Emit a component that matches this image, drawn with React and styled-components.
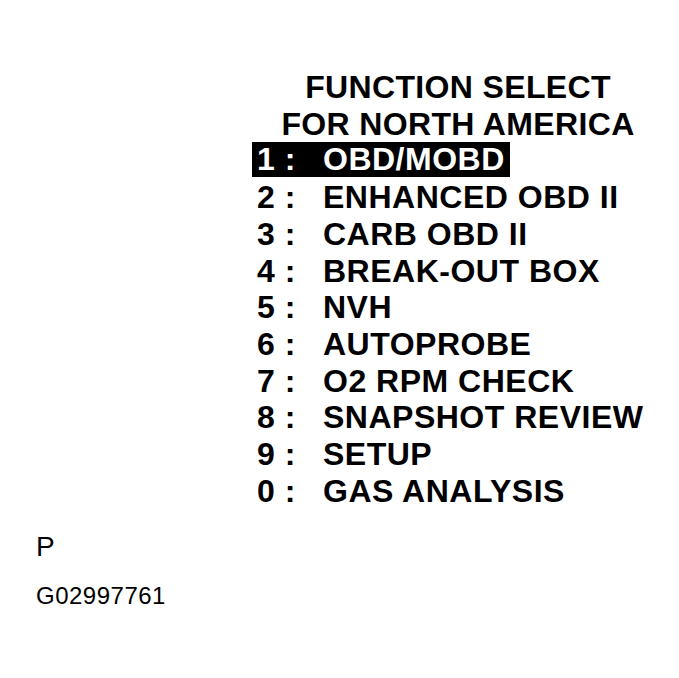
import React from "react";
import styled, { createGlobalStyle } from "styled-components";

const GlobalStyle = createGlobalStyle`
  html, body {
    margin: 0;
    padding: 0;
    background: #fff;
  }
  body {
    font-family: "Liberation Sans", Arial, Helvetica, sans-serif;
    color: #000;
  }
`;

const ROW_HEIGHT = 36.7;

const menuItems = [
  { key: "1", label: "OBD/MOBD" },
  { key: "2", label: "ENHANCED OBD II" },
  { key: "3", label: "CARB OBD II" },
  { key: "4", label: "BREAK-OUT BOX" },
  { key: "5", label: "NVH" },
  { key: "6", label: "AUTOPROBE" },
  { key: "7", label: "O2 RPM CHECK" },
  { key: "8", label: "SNAPSHOT REVIEW" },
  { key: "9", label: "SETUP" },
  { key: "0", label: "GAS ANALYSIS" },
];

const Page = styled.div`
  width: 679px;
  min-height: 678px;
  padding-top: 69px;
  box-sizing: border-box;
`;

const Screen = styled.div`
  margin-left: 257px;
  width: 402px;
  font-weight: bold;
  font-size: 32px;
`;

const Title = styled.div`
  text-align: center;
  line-height: ${ROW_HEIGHT}px;
  letter-spacing: 0.35px;
  white-space: nowrap;
`;

const Menu = styled.div`
  display: flex;
  flex-direction: column;
  align-items: flex-start;
`;

const Row = styled.div`
  display: flex;
  white-space: nowrap;
  letter-spacing: 0.5px;
  line-height: ${(p) => (p.$selected ? "35px" : `${ROW_HEIGHT}px`)};
  background: ${(p) => (p.$selected ? "#000" : "transparent")};
  color: ${(p) => (p.$selected ? "#fff" : "#000")};
  margin: ${(p) => (p.$selected ? "0 0 1.7px -5px" : "0")};
  padding: ${(p) => (p.$selected ? "0 5px 0 5px" : "0")};
`;

const Key = styled.span`
  width: 66px;
  flex: none;
`;

const Label = styled.span``;

const Footer = styled.div`
  margin-left: 36px;
  margin-top: 22px;
`;

const Mark = styled.div`
  font-size: 28px;
  line-height: 32px;
`;

const Code = styled.div`
  margin-top: 18.7px;
  font-size: 24px;
  line-height: 28px;
  letter-spacing: 0.5px;
`;

export default function App() {
  return (
    <Page>
      <GlobalStyle />
      <Screen>
        <Title>FUNCTION SELECT</Title>
        <Title>FOR NORTH AMERICA</Title>
        <Menu>
          {menuItems.map((item, i) => (
            <Row key={item.key} $selected={i === 0}>
              <Key>{item.key} :</Key>
              <Label>{item.label}</Label>
            </Row>
          ))}
        </Menu>
      </Screen>
      <Footer>
        <Mark>P</Mark>
        <Code>G02997761</Code>
      </Footer>
    </Page>
  );
}
